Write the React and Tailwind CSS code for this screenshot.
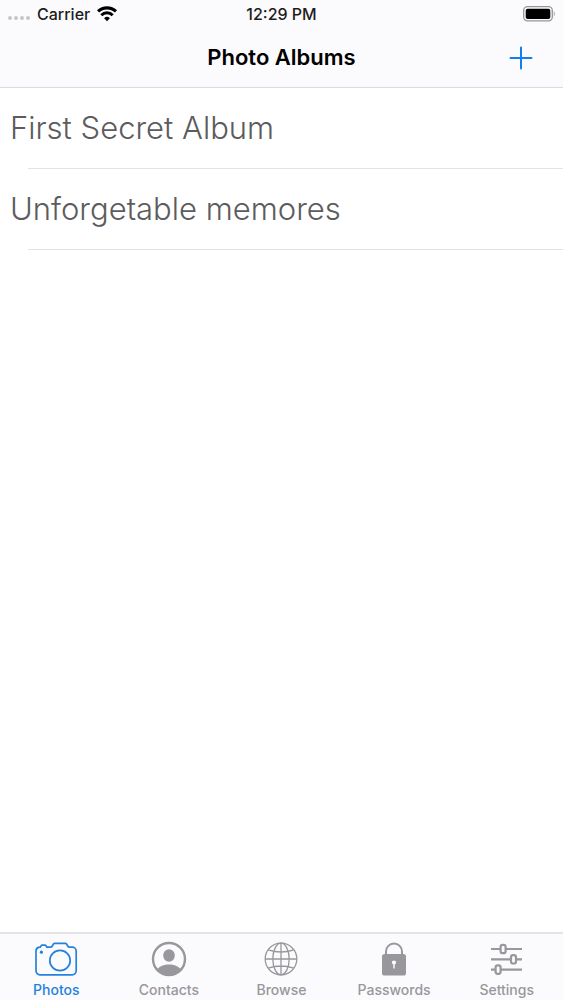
import { useState } from 'react';

const albums = ['First Secret Album', 'Unforgetable memores'];

function WifiIcon() {
  return (
    <svg className="h-4 w-5" viewBox="0 0 20 16" fill="none" stroke="#000" aria-hidden="true">
      <path d="M1 5.4a13 13 0 0 1 18 0" strokeWidth="3.2" />
      <path d="M4.3 9.2a8 8 0 0 1 11.4 0" strokeWidth="2.9" />
      <path d="M10 15.2l-2.9-3a4.2 4.2 0 0 1 5.8 0z" fill="#000" stroke="none" />
    </svg>
  );
}

function BatteryIcon() {
  return (
    <svg className="h-4 w-8" viewBox="0 0 32 16" aria-hidden="true">
      <rect x="0.7" y="0.7" width="28.6" height="14.2" rx="3.8" fill="none" stroke="#969698" strokeWidth="1.3" />
      <rect x="2.7" y="2.7" width="24.6" height="10.2" rx="2" fill="#000" />
      <path d="M30.8 5.3c1.2.6 1.2 4.6 0 5.2z" fill="#969698" />
    </svg>
  );
}

function CameraIcon() {
  return (
    <svg className="h-9 w-11" viewBox="0 0 44 36" fill="none" stroke="currentColor" strokeWidth="1.7" strokeLinejoin="round" aria-hidden="true">
      <path d="M6.2 6.2 7 4.9c.3-.5.7-.7 1.3-.7h2.5c.6 0 1 .2 1.3.7l.8 1.3h3.2c1.5 0 1.9-.5 2.5-1.7l.7-1.3c.3-.6.8-.8 1.5-.8h10.4c.7 0 1.2.2 1.5.8l.7 1.3c.6 1.2 1 1.7 2.5 1.7h2.3a4 4 0 0 1 4 4v19.6a4 4 0 0 1-4 4H6a4 4 0 0 1-4-4V10.2c0-2.3 1.5-4 4.2-4z" />
      <circle cx="26" cy="19.5" r="10.2" />
      <circle cx="7.4" cy="11.2" r="1.6" fill="currentColor" stroke="none" />
    </svg>
  );
}

function ContactIcon() {
  return (
    <svg className="h-9 w-11" viewBox="0 0 44 36" aria-hidden="true">
      <circle cx="22" cy="18" r="16" fill="none" stroke="currentColor" strokeWidth="2.4" />
      <ellipse cx="22" cy="14.5" rx="5.8" ry="6.2" fill="currentColor" />
      <path d="M10.4 28.2c2-3 6.4-4.8 11.6-4.8s9.6 1.8 11.6 4.8C31 31.6 27 34 22 34s-9-2.4-11.6-5.8z" fill="currentColor" />
    </svg>
  );
}

function GlobeIcon() {
  return (
    <svg className="h-9 w-11" viewBox="0 0 44 36" fill="none" stroke="currentColor" strokeWidth="1.3" aria-hidden="true">
      <circle cx="22" cy="18" r="15.8" />
      <ellipse cx="22" cy="18" rx="8.2" ry="15.8" />
      <path d="M22 2.2v31.6M6.2 18h31.6M9.2 8.8c7.6 2.6 18 2.6 25.6 0M9.2 27.2c7.6-2.6 18-2.6 25.6 0" />
    </svg>
  );
}

function LockIcon() {
  return (
    <svg className="h-9 w-11" viewBox="0 0 44 36" aria-hidden="true">
      <path d="M14 15v-4.5a8 8 0 0 1 16 0V15" fill="none" stroke="currentColor" strokeWidth="2" />
      <rect x="10" y="13" width="24" height="21.5" rx="2.6" fill="currentColor" />
      <circle cx="22" cy="21.5" r="2.1" fill="#fff" />
      <path d="M21.3 22h1.4v5.4h-1.4z" fill="#fff" />
    </svg>
  );
}

function SlidersIcon() {
  return (
    <svg className="h-9 w-11" viewBox="0 0 44 36" fill="none" stroke="currentColor" strokeWidth="2.2" aria-hidden="true">
      <path d="M6 8h9.5M20.5 8H37M6 18.3h20M31 18.3h6M6 28.6h4.5M15.5 28.6H37" />
      <rect x="15.6" y="3.8" width="5" height="8.4" rx="2" />
      <rect x="26" y="14.1" width="5" height="8.4" rx="2" />
      <rect x="10.6" y="24.4" width="5" height="8.4" rx="2" />
    </svg>
  );
}

const tabs = [
  { name: 'Photos', Icon: CameraIcon },
  { name: 'Contacts', Icon: ContactIcon },
  { name: 'Browse', Icon: GlobeIcon },
  { name: 'Passwords', Icon: LockIcon },
  { name: 'Settings', Icon: SlidersIcon },
];

function StatusBar() {
  return (
    <div className="grid h-7 grid-cols-3 items-center px-2 text-base font-medium text-[#1c1c1e]">
      <div className="flex items-center gap-[7px]">
        <div className="flex gap-0.5 pt-2">
          {[0, 1, 2, 3].map((dot) => (
            <span key={dot} className="size-1 rounded-full bg-[#c6c5c8]" />
          ))}
        </div>
        <span>Carrier</span>
        <WifiIcon />
      </div>
      <span className="text-center">12:29 PM</span>
      <div className="flex justify-end">
        <BatteryIcon />
      </div>
    </div>
  );
}

const App = () => {
  const [active, setActive] = useState('Photos');

  return (
    <div className="flex min-h-screen flex-col bg-white font-['Inter',sans-serif]">
      <header className="border-b border-[#dcdbdd] bg-[#fbfafc]">
        <StatusBar />
        <div className="grid h-[59px] grid-cols-[1fr_auto_1fr] items-center px-[26px]">
          <h1 className="col-start-2 text-[22px] font-semibold text-black">Photo Albums</h1>
          <button type="button" aria-label="Add album" className="justify-self-end p-1 text-[#1180ee]">
            <svg className="size-6" viewBox="0 0 24 24" stroke="currentColor" strokeWidth="2" strokeLinecap="round" aria-hidden="true">
              <path d="M12 1.5v21M1.5 12h21" />
            </svg>
          </button>
        </div>
      </header>

      <main className="flex-1">
        <ul>
          {albums.map((album) => (
            <li key={album}>
              <a href="#album" className="flex h-20 items-center pl-[10px] text-[31px] font-light text-[#5c5b5e]">
                {album}
              </a>
              <div className="ml-7 border-b border-[#e2e1e3]" />
            </li>
          ))}
        </ul>
      </main>

      <nav className="grid grid-cols-5 border-t-2 border-[#e4e3e8] bg-[#fbfafc]">
        {tabs.map(({ name, Icon }) => (
          <button
            key={name}
            type="button"
            onClick={() => setActive(name)}
            className={`flex flex-col items-center gap-[5px] pt-[7px] pb-0.5 text-sm font-medium ${
              active === name ? 'text-[#2482dc]' : 'text-[#98979b]'
            }`}
          >
            <Icon />
            <span className="leading-4">{name}</span>
          </button>
        ))}
      </nav>
    </div>
  );
};

export default App;
